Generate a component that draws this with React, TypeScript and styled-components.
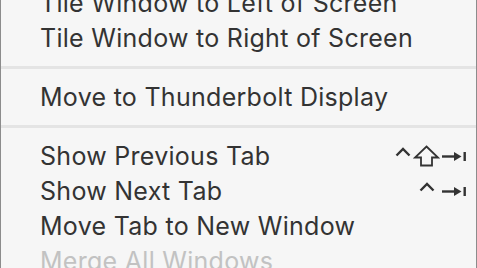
import React from "react";
import styled, { createGlobalStyle } from "styled-components";

const GlobalStyle = createGlobalStyle`
  html, body {
    margin: 0;
    padding: 0;
    background: #f6f6f6;
    overflow: hidden;
  }
`;

const Menu = styled.div`
  width: 477px;
  height: 268px;
  box-sizing: border-box;
  overflow: hidden;
  background: #f6f6f6;
  border-left: 1px solid #8c8c8c;
  border-right: 1px solid #8c8c8c;
`;

const List = styled.ul`
  margin: -14.5px 0 0;
  padding: 0;
  list-style: none;
`;

const Item = styled.li<{ $disabled?: boolean }>`
  display: flex;
  align-items: center;
  justify-content: space-between;
  height: 35px;
  padding: 0 9px 0 39px;
  font-family: Inter, "Noto Sans", sans-serif;
  font-size: 25px;
  line-height: 35px;
  letter-spacing: 0.28px;
  color: ${(p) => (p.$disabled ? "#c2c2c2" : "#333333")};
  white-space: nowrap;
`;

const Separator = styled.li`
  height: 24px;
  display: flex;
  align-items: center;

  &::after {
    content: "";
    flex: 1;
    height: 3px;
    background: #e4e4e4;
  }
`;

const Shortcut = styled.span`
  display: flex;
  align-items: center;
  gap: 2px;
`;

// one column per modifier glyph; the last one sits in the wide shift column
const Slot = styled.span<{ $width: number }>`
  display: flex;
  justify-content: center;
  width: ${(p) => p.$width}px;
`;

const Caret = () => (
  <svg width="16" height="20" viewBox="0 0 16 20">
    <polyline
      points="1.5,9.5 8,3 14.5,9.5"
      fill="none"
      stroke="#333"
      strokeWidth="2.4"
    />
  </svg>
);

const Shift = () => (
  <svg width="27" height="22" viewBox="0 0 27 22">
    <polygon
      points="13.5,1.5 25,12.5 19,12.5 19,20.5 8,20.5 8,12.5 2,12.5"
      fill="none"
      stroke="#333"
      strokeWidth="1.8"
    />
  </svg>
);

const Tab = () => (
  <svg width="25" height="22" viewBox="0 0 25 22">
    <line x1="0" y1="11.5" x2="15" y2="11.5" stroke="#333" strokeWidth="2.4" />
    <polygon points="12,7 19.5,11.5 12,16" fill="#333" />
    <rect x="21.5" y="7" width="2.4" height="9" fill="#333" />
  </svg>
);

type Mod = "ctrl" | "shift";

type Entry =
  | { kind: "item"; label: string; mods?: Mod[]; tab?: boolean; disabled?: boolean }
  | { kind: "sep" };

const entries: Entry[] = [
  { kind: "item", label: "Tile Window to Left of Screen" },
  { kind: "item", label: "Tile Window to Right of Screen" },
  { kind: "sep" },
  { kind: "item", label: "Move to Thunderbolt Display" },
  { kind: "sep" },
  { kind: "item", label: "Show Previous Tab", mods: ["ctrl", "shift"], tab: true },
  { kind: "item", label: "Show Next Tab", mods: ["ctrl"], tab: true },
  { kind: "item", label: "Move Tab to New Window" },
  { kind: "item", label: "Merge All Windows", disabled: true },
];

const App = () => (
  <>
    <GlobalStyle />
    <Menu>
      <List>
        {entries.map((e, i) =>
          e.kind === "sep" ? (
            <Separator key={i} />
          ) : (
            <Item key={i} $disabled={e.disabled}>
              <span>{e.label}</span>
              {e.tab && (
                <Shortcut>
                  {e.mods?.map((m, j, all) => (
                    <Slot key={m} $width={j === all.length - 1 ? 27 : 16}>
                      {m === "ctrl" ? <Caret /> : <Shift />}
                    </Slot>
                  ))}
                  <Tab />
                </Shortcut>
              )}
            </Item>
          )
        )}
      </List>
    </Menu>
  </>
);

export default App;
